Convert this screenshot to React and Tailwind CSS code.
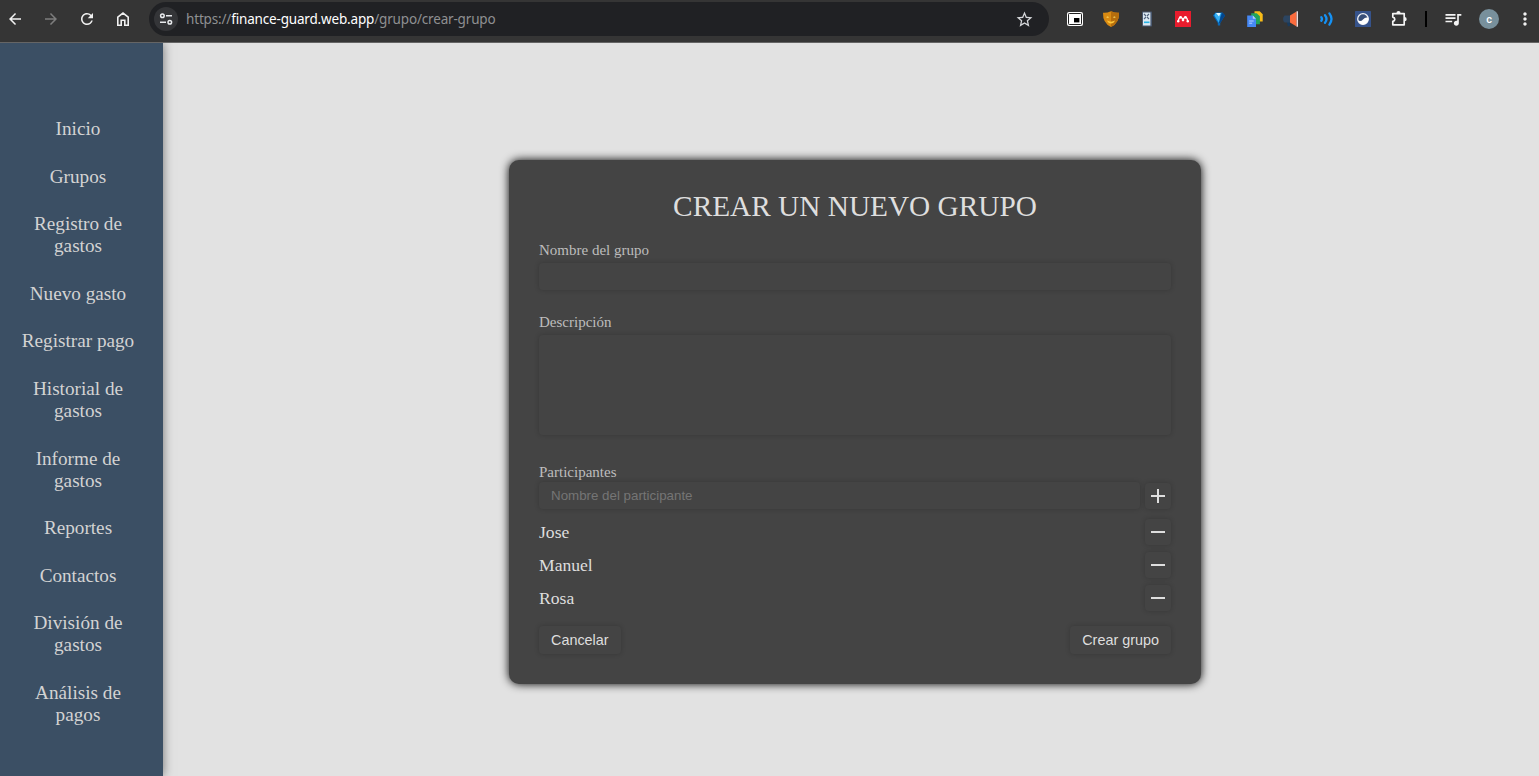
import React from 'react';
import { MdQueueMusic, MdMoreVert, MdStarBorder, MdRefresh, MdArrowBack, MdArrowForward } from 'react-icons/md';

const links = [
  'Inicio',
  'Grupos',
  'Registro de gastos',
  'Nuevo gasto',
  'Registrar pago',
  'Historial de gastos',
  'Informe de gastos',
  'Reportes',
  'Contactos',
  'División de gastos',
  'Análisis de pagos',
];

const participants = ['Jose', 'Manuel', 'Rosa'];

function HomeIcon() {
  return (
    <svg width="18" height="18" viewBox="0 0 18 18" fill="none" stroke="#f1f1f1" strokeWidth="1.6">
      <path d="M3.8 15.2V7.2L9 3.1l5.2 4.1v8h-3.4v-4.9H7.2v4.9z" />
    </svg>
  );
}

function TuneIcon() {
  return (
    <svg width="14" height="14" viewBox="0 0 14 14" fill="none" stroke="#e8eaed" strokeWidth="1.5">
      <circle cx="3.4" cy="3.8" r="1.8" />
      <path d="M7 3.8h6M1 10.2h6" />
      <circle cx="10.8" cy="10.2" r="1.8" />
    </svg>
  );
}

function PipIcon() {
  return (
    <svg width="18" height="18" viewBox="0 0 18 18">
      <rect x="1" y="2" width="16" height="14" rx="2" fill="#fff" />
      <rect x="2.5" y="3.5" width="13" height="11" rx="0.8" fill="#fff" stroke="#222" />
      <rect x="8" y="8" width="5.4" height="4.4" fill="#000" />
    </svg>
  );
}

function MaskIcon() {
  return (
    <svg width="18" height="18" viewBox="0 0 18 18">
      <path d="M1 2.7Q5 3 9 1.2Q13 3 17 2.7Q17.4 13 9 17Q.6 13 1 2.7z" fill="#d98a12" />
      <path d="M9 1.2Q13 3 17 2.7Q17.4 13 9 17z" fill="#b56d0d" />
      <path d="M4.2 7.2q1.2-1.6 3 0q-1.6.9-3 0zM13.8 7.2q-1.2-1.6-3 0q1.6.9 3 0z" fill="#ffe26c" />
      <path d="M5 10.6q4 2.2 8 0q-1.2 3-4 3t-4-3z" fill="#ffc93a" />
    </svg>
  );
}

function DeviceIcon() {
  return (
    <svg width="18" height="18" viewBox="0 0 18 18">
      <rect x="4" y="1.5" width="10" height="15" rx="0.8" fill="#48576e" />
      <rect x="5" y="2.5" width="7.4" height="13" fill="#dce9f2" />
      <path d="M6 4l2 2m3-2L9 6M6 9l2-2m3 2L9 7" stroke="#52647d" strokeWidth="1.1" />
      <rect x="6" y="11.5" width="5.5" height="1.6" fill="#27b4e4" />
    </svg>
  );
}

function MendeleyIcon() {
  return (
    <svg width="18" height="18" viewBox="0 0 18 18">
      <rect x="1" y="1" width="16" height="16" fill="#e91c2d" />
      <path d="M4.3 11.6Q4.6 8 6.4 7.2q1.8.4 2.6 2.6q.8-2.2 2.6-2.6q1.8.8 2.1 4.4" fill="none" stroke="#fff" strokeWidth="1.3" />
      <circle cx="6.6" cy="7.3" r="1.4" fill="#fff" />
      <circle cx="11.4" cy="7.3" r="1.4" fill="#fff" />
      <circle cx="9" cy="10" r="1.3" fill="#fff" />
      <circle cx="4.2" cy="11.3" r="1.2" fill="#fff" />
      <circle cx="13.8" cy="11.3" r="1.2" fill="#fff" />
    </svg>
  );
}

function DiamondIcon() {
  return (
    <svg width="18" height="18" viewBox="0 0 18 18">
      <path d="M5.5 2.5h7L15 5.6 10.2 13v2.5H7.8V13L3 5.6z" fill="#0868b8" />
      <path d="M5.6 3h5.6l-.8 3L9 13 4.4 5.6z" fill="#35b0f4" />
      <path d="M6 3h4.6L9 6.6z" fill="#e2f7ff" />
      <path d="M12.5 2.5L15 5.6 10.2 13H9l2-7z" fill="#04468c" />
    </svg>
  );
}

function DocsIcon() {
  return (
    <svg width="18" height="18" viewBox="0 0 18 18">
      <path d="M8.5 1.2h5.2l3 3v7.3H8.5z" fill="#f8bc18" />
      <path d="M5.2 3.2h5.5l3.2 3v8H5.2z" fill="#20a45c" />
      <path d="M1.2 5.5h5.6L10 8.7V17H1.2z" fill="#4688f4" />
      <path d="M6.8 5.5L10 8.7H6.8z" fill="#b5d0fb" />
      <path d="M3.2 11h4.5M3.2 13.2h3" stroke="#b9d2ff" />
    </svg>
  );
}

function MegaphoneIcon() {
  return (
    <svg width="18" height="18" viewBox="0 0 18 18">
      <path d="M4.5 11h3l.8 4.8-2.4.8z" fill="#193a5c" />
      <path d="M2.5 5.5H8v7H2.5Q1 11 1 9t1.5-3.5z" fill="#2c4561" />
      <path d="M8 5.5l6.6-4v15L8 12.5z" fill="#fb6b3d" />
      <path d="M14.6 1.3h1.4v15.4h-1.4z" fill="#e9d9dc" />
    </svg>
  );
}

function WavesIcon() {
  return (
    <svg width="18" height="18" viewBox="0 0 18 18" fill="none" stroke="#1592f5" strokeWidth="2.3" strokeLinecap="round">
      <path d="M3.3 7.2q1.4 1.8 0 3.6M7 5.2q3 3.8 0 7.6M11.4 3.4q4.2 5.6 0 11.2" />
    </svg>
  );
}

function GlobeIcon() {
  return (
    <svg width="18" height="18" viewBox="0 0 18 18">
      <rect x="1" y="1" width="16" height="16" rx="0.6" fill="#36538b" />
      <circle cx="9" cy="9" r="5.3" fill="#384e77" stroke="#f2f3f5" strokeWidth="1.3" />
      <path d="M3.8 10.2q3 1.8 5.2-.8t5.2-1.8q.8 4-2.4 6t-6-.3q-1.6-1.4-2-3.1z" fill="#fff" />
    </svg>
  );
}

function PuzzleIcon() {
  return (
    <svg width="20" height="20" viewBox="0 0 20 20">
      <path d="M3.8 4.6h11.4v11.2H3.8v-3.5q2-.4 2-2.1t-2-2.1z" fill="none" stroke="#f4f4f4" strokeWidth="1.7" strokeLinejoin="round" />
      <path d="M7.4 4.2a2.1 2.1 0 0 1 4.2 0zM15.6 8.1a2.1 2.1 0 0 1 0 4.2z" fill="#f4f4f4" />
    </svg>
  );
}

function Slot({ children }) {
  return <div className="flex w-9 shrink-0 items-center justify-center">{children}</div>;
}

function BrowserBar() {
  return (
    <header className="relative z-20 flex h-[43px] shrink-0 items-start border-b border-[#656565] bg-[#353535] pt-0.5">
      <div className="flex h-[34px] w-[149px] shrink-0 items-center">
        <div className="flex w-[33px] items-center pl-[6px]"><MdArrowBack size={18} color="#f1f1f1" /></div>
        <Slot><MdArrowForward size={18} color="#7d7d7d" /></Slot>
        <Slot><MdRefresh size={18} color="#f1f1f1" /></Slot>
        <Slot><HomeIcon /></Slot>
      </div>
      <div className="flex h-[34px] w-[900px] shrink-0 items-center rounded-full bg-[#202124] pr-[15px] pl-[5px]">
        <div className="flex size-6 items-center justify-center rounded-full bg-[#343538]"><TuneIcon /></div>
        <div className="ml-2 flex-1 whitespace-pre font-['Noto_Sans','Open_Sans',sans-serif] text-[13.5px] leading-5 tracking-[-0.17px] text-[#8f9092]">
          <span>https://</span><span className="text-white">finance-guard.web.app</span><span>/grupo/crear-grupo</span>
        </div>
        <MdStarBorder size={19} color="#d5d7da" />
      </div>
      <div className="flex h-[34px] flex-1 items-center pl-2">
        <Slot><PipIcon /></Slot>
        <Slot><MaskIcon /></Slot>
        <Slot><DeviceIcon /></Slot>
        <Slot><MendeleyIcon /></Slot>
        <Slot><DiamondIcon /></Slot>
        <Slot><DocsIcon /></Slot>
        <Slot><MegaphoneIcon /></Slot>
        <Slot><WavesIcon /></Slot>
        <Slot><GlobeIcon /></Slot>
        <Slot><PuzzleIcon /></Slot>
        <div className="ml-2 h-4 w-0.5 shrink-0 bg-black" />
        <div className="ml-2 flex w-9 shrink-0 items-center justify-center"><MdQueueMusic size={20} color="#f4f4f4" /></div>
        <Slot>
          <div className="flex size-5 items-center justify-center rounded-full bg-[#78909c] font-['Roboto',sans-serif] text-[11px] leading-none font-medium text-white">c</div>
        </Slot>
        <Slot><MdMoreVert size={20} color="#f1f1f1" /></Slot>
      </div>
    </header>
  );
}

function Sidebar() {
  return (
    <nav className="z-10 flex w-[163px] shrink-0 flex-col gap-[25.6px] bg-[#3b4f64] pt-[75px] pr-[27px] pl-5 text-center text-[19.2px] leading-[22px] text-[#d3d3d3] shadow-[0_0_10px_rgba(0,0,0,0.5)]">
      {links.map((link) => <a key={link}>{link}</a>)}
    </nav>
  );
}

function RoundButton({ minus }) {
  return (
    <button type="button" className="flex size-[26px] shrink-0 items-center justify-center rounded-[4px] shadow-[0_0_5px_rgba(0,0,0,0.2)]">
      <svg width="16" height="16" viewBox="0 0 16 16" fill="#dedede">
        <rect x="1" y="7" width="14" height="2" />
        {!minus && <rect x="7" y="1" width="2" height="14" />}
      </svg>
    </button>
  );
}

function GroupForm() {
  return (
    <form className="mt-[117px] ml-[346px] flex h-[524px] w-[692px] shrink-0 flex-col rounded-[10px] bg-[#444444] px-[30px] pt-[29px] shadow-[0_0_10px_#000000]">
      <h1 className="h-[35px] whitespace-nowrap text-center text-[29.3px] leading-[34px] text-[#dedede]">CREAR UN NUEVO GRUPO</h1>
      <label className="mt-[18px] text-[15px] leading-[17px] text-[#bdbdbd]">Nombre del grupo</label>
      <input className="mt-1 h-[27px] rounded-[4px] shadow-[0_0_5px_rgba(0,0,0,0.2)]" />
      <label className="mt-6 text-[15px] leading-[17px] text-[#bdbdbd]">Descripción</label>
      <textarea className="mt-1 h-[100px] resize-none rounded-[4px] shadow-[0_0_5px_rgba(0,0,0,0.2)]" />
      <label className="mt-[29px] text-[15px] leading-[17px] text-[#bdbdbd]">Participantes</label>
      <div className="mt-px flex items-end gap-[5px]">
        <input
          placeholder="Nombre del participante"
          className="h-[27px] min-w-0 flex-1 rounded-[4px] px-3 font-['Liberation_Sans',sans-serif] text-[13.33px] shadow-[0_0_5px_rgba(0,0,0,0.2)] placeholder:text-[#757575]"
        />
        <RoundButton />
      </div>
      <ul className="mt-2.5 flex flex-col gap-[7px]">
        {participants.map((name) => (
          <li key={name} className="flex h-[26px] items-center justify-between text-[17.6px] leading-5 text-[#dedede]">
            <span>{name}</span>
            <RoundButton minus />
          </li>
        ))}
      </ul>
      <div className="mt-[15px] flex justify-between font-['Liberation_Sans',sans-serif] text-[14.4px] leading-7 text-[#dedede]">
        <button type="button" className="h-7 rounded-[4px] px-3 shadow-[0_0_5px_rgba(0,0,0,0.2)]">Cancelar</button>
        <button type="button" className="h-7 rounded-[4px] px-3 shadow-[0_0_5px_rgba(0,0,0,0.2)]">Crear grupo</button>
      </div>
    </form>
  );
}

export default function App() {
  return (
    <div className="flex h-screen flex-col overflow-hidden bg-[#e2e2e2] font-['Liberation_Serif',serif]">
      <BrowserBar />
      <div className="flex min-h-0 flex-1">
        <Sidebar />
        <main className="flex flex-1 items-start">
          <GroupForm />
        </main>
      </div>
    </div>
  );
}
